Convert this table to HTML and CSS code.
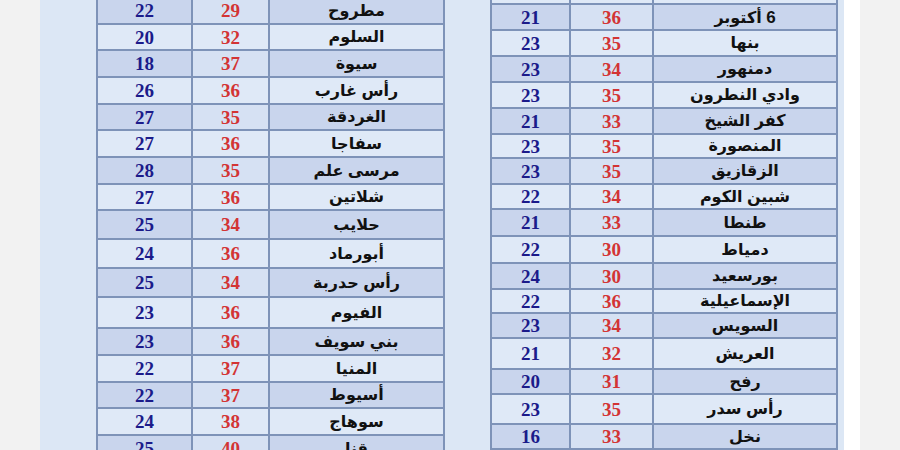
FILE: index.html
```html
<!DOCTYPE html>
<html lang="ar">
<head>
<meta charset="utf-8">
<title>درجات الحرارة</title>
<link rel="stylesheet" href="styles.css">
</head>
<body>
<div class="page">
  <div class="panel">
    <table class="temps left">
      <colgroup><col class="c1"><col class="c2"><col class="c3"></colgroup>
      <tr class="d h27"><td class="mn">22</td><td class="mx">29</td><td class="nm">مطروح</td></tr>
      <tr class="l h26"><td class="mn">20</td><td class="mx">32</td><td class="nm">السلوم</td></tr>
      <tr class="d h27"><td class="mn">18</td><td class="mx">37</td><td class="nm">سيوة</td></tr>
      <tr class="l h27"><td class="mn">26</td><td class="mx">36</td><td class="nm">رأس غارب</td></tr>
      <tr class="d h26"><td class="mn">27</td><td class="mx">35</td><td class="nm">الغردقة</td></tr>
      <tr class="l h27"><td class="mn">27</td><td class="mx">36</td><td class="nm">سفاجا</td></tr>
      <tr class="d h27"><td class="mn">28</td><td class="mx">35</td><td class="nm">مرسى علم</td></tr>
      <tr class="l h26"><td class="mn">27</td><td class="mx">36</td><td class="nm">شلاتين</td></tr>
      <tr class="d h29"><td class="mn">25</td><td class="mx">34</td><td class="nm">حلايب</td></tr>
      <tr class="l h29"><td class="mn">24</td><td class="mx">36</td><td class="nm">أبورماد</td></tr>
      <tr class="d h29"><td class="mn">25</td><td class="mx">34</td><td class="nm">رأس حدربة</td></tr>
      <tr class="l h31"><td class="mn">23</td><td class="mx">36</td><td class="nm">الفيوم</td></tr>
      <tr class="d h27"><td class="mn">23</td><td class="mx">36</td><td class="nm">بني سويف</td></tr>
      <tr class="l h27"><td class="mn">22</td><td class="mx">37</td><td class="nm">المنيا</td></tr>
      <tr class="d h26"><td class="mn">22</td><td class="mx">37</td><td class="nm">أسيوط</td></tr>
      <tr class="l h27"><td class="mn">24</td><td class="mx">38</td><td class="nm">سوهاج</td></tr>
      <tr class="d h27"><td class="mn">25</td><td class="mx">40</td><td class="nm">قنا</td></tr>
    </table>
    <table class="temps right">
      <colgroup><col class="k1"><col class="k2"><col class="k3"></colgroup>
      <tr class="l h26"><td class="mn"></td><td class="mx"></td><td class="nm"></td></tr>
      <tr class="d h26"><td class="mn">21</td><td class="mx">36</td><td class="nm"><span class="six">6</span> أكتوبر</td></tr>
      <tr class="l h26"><td class="mn">23</td><td class="mx">35</td><td class="nm">بنها</td></tr>
      <tr class="d h26"><td class="mn">23</td><td class="mx">34</td><td class="nm">دمنهور</td></tr>
      <tr class="l h26"><td class="mn">23</td><td class="mx">35</td><td class="nm">وادي النطرون</td></tr>
      <tr class="d h26"><td class="mn">21</td><td class="mx">33</td><td class="nm">كفر الشيخ</td></tr>
      <tr class="l h24"><td class="mn">23</td><td class="mx">35</td><td class="nm">المنصورة</td></tr>
      <tr class="d h26"><td class="mn">23</td><td class="mx">35</td><td class="nm">الزقازيق</td></tr>
      <tr class="l h25"><td class="mn">22</td><td class="mx">34</td><td class="nm">شبين الكوم</td></tr>
      <tr class="d h27"><td class="mn">21</td><td class="mx">33</td><td class="nm">طنطا</td></tr>
      <tr class="l h27"><td class="mn">22</td><td class="mx">30</td><td class="nm">دمياط</td></tr>
      <tr class="d h26"><td class="mn">24</td><td class="mx">30</td><td class="nm">بورسعيد</td></tr>
      <tr class="l h24"><td class="mn">22</td><td class="mx">36</td><td class="nm">الإسماعيلية</td></tr>
      <tr class="d h25"><td class="mn">23</td><td class="mx">34</td><td class="nm">السويس</td></tr>
      <tr class="l h31"><td class="mn">21</td><td class="mx">32</td><td class="nm">العريش</td></tr>
      <tr class="d h25"><td class="mn">20</td><td class="mx">31</td><td class="nm">رفح</td></tr>
      <tr class="l h30"><td class="mn">23</td><td class="mx">35</td><td class="nm">رأس سدر</td></tr>
      <tr class="d h25"><td class="mn">16</td><td class="mx">33</td><td class="nm">نخل</td></tr>
      <tr class="l h26"><td class="mn"></td><td class="mx"></td><td class="nm"></td></tr>
    </table>
  </div>
  <div class="strip"></div>
</div>
</body>
</html>
```
FILE: styles.css
```css
html, body {
  margin: 0;
  padding: 0;
  background: #f2f2f2;
}
.page {
  display: flex;
  height: 450px;
  overflow: hidden;
  padding-left: 40px;
}
.panel {
  width: 804px;
  height: 450px;
  overflow: hidden;
  background: #dce7f5;
  display: flex;
  align-items: flex-start;
  padding-left: 56px;
  box-sizing: border-box;
  gap: 45px;
}
.strip {
  width: 16px;
  height: 450px;
  background: #ffffff;
}
.temps {
  border-collapse: collapse;
  table-layout: fixed;
  flex: none;
}
.temps td {
  border: 2px solid #7e93b8;
  padding: 0;
  text-align: center;
  vertical-align: middle;
  line-height: 1;
}
.left { width: 347px; margin-top: -4px; }
.right { width: 346px; margin-top: -23px; }
.c1 { width: 95px; }
.c2 { width: 77px; }
.c3 { width: 175px; }
.k1 { width: 79px; }
.k2 { width: 83px; }
.k3 { width: 184px; }
.h24 { height: 24px; }
.h25 { height: 25px; }
.h26 { height: 26px; }
.h27 { height: 27px; }
.h29 { height: 29px; }
.h30 { height: 30px; }
.h31 { height: 31px; }
.d td { background: #c9d5ed; }
.d td.mx { background: #d6e1f3; }
.l td { background: #dfe9f7; }
.mn, .mx {
  font-family: "Liberation Serif", serif;
  font-weight: bold;
  font-size: 19px;
}
.mn { color: #1b1b8a; }
.mx { color: #d33434; }
.nm {
  direction: rtl;
  font-family: "Liberation Sans", "DejaVu Sans", sans-serif;
  font-weight: bold;
  font-size: 16px;
  color: #111111;
}
.six { font-size: 17px; }
```
